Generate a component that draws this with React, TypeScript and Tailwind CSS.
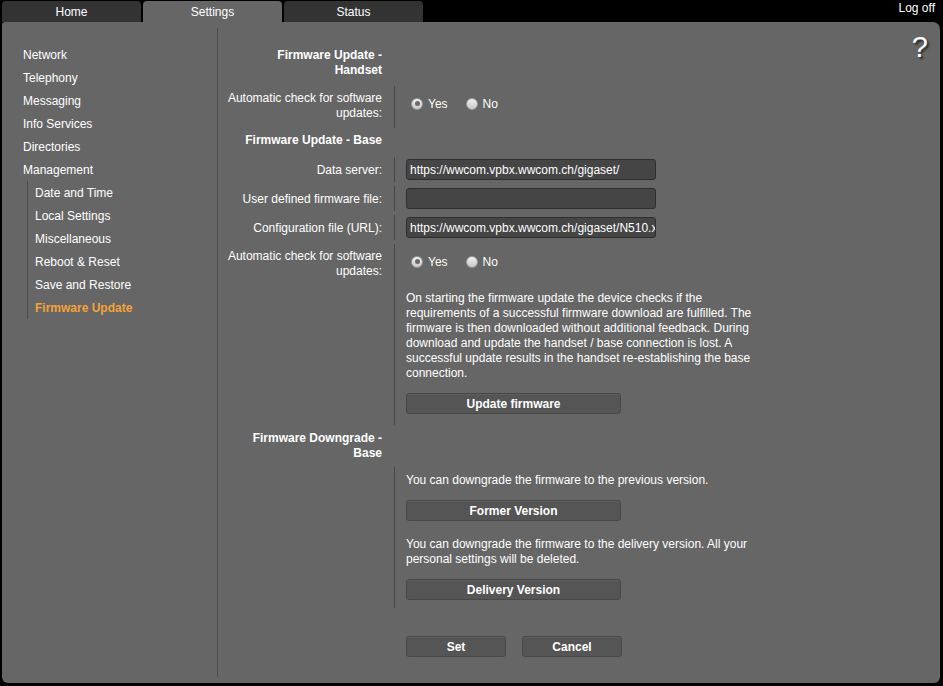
import React from "react";

const font = { fontFamily: '"Liberation Sans", Arial, sans-serif' };

function Radio({ checked }: { checked?: boolean }) {
  return (
    <span className="relative inline-flex h-[12px] w-[12px] items-center justify-center rounded-full border border-[#9a9a9a] bg-gradient-to-b from-[#f2f2f2] to-[#c8c8c8]">
      {checked && <span className="h-[5px] w-[5px] rounded-full bg-[#6a6a6a]" />}
    </span>
  );
}

function YesNo() {
  return (
    <div className="flex h-[15px] items-center pl-[5px]">
      <Radio checked />
      <span className="ml-[5px]">Yes</span>
      <span className="ml-[18px] flex items-center">
        <Radio />
        <span className="ml-[5px]">No</span>
      </span>
    </div>
  );
}

function Btn({ children, w = "w-[215px]" }: { children: React.ReactNode; w?: string }) {
  return (
    <button
      className={`${w} h-[21px] rounded-[3px] border border-[#484848] bg-[#555555] text-[12px] font-bold leading-none text-white shadow-[inset_0_1px_0_#5e5e5e]`}
      style={font}
    >
      {children}
    </button>
  );
}

function Field({ value }: { value: string }) {
  return (
    <input
      readOnly
      value={value}
      className="h-[21px] w-[250px] rounded-[3px] border border-[#2f2f2f] bg-[#454545] pl-[3px] text-[12px] text-white outline-none"
      style={font}
    />
  );
}

function Header({ children }: { children: React.ReactNode }) {
  return (
    <div className="flex">
      <div className="w-[176px] whitespace-nowrap py-[5px] pr-[12px] text-right font-bold leading-[15px]">
        {children}
      </div>
    </div>
  );
}

function InputRow({ label, value }: { label: string; value: string }) {
  return (
    <div className="flex h-[29px]">
      <div className="flex w-[176px] items-center justify-end whitespace-nowrap pr-[12px]">{label}</div>
      <div className="my-[2px] flex items-center border-l border-[#474747] pl-[11px]">
        <Field value={value} />
      </div>
    </div>
  );
}

const sideMain = ["Network", "Telephony", "Messaging", "Info Services", "Directories", "Management"];
const sideSub = ["Date and Time", "Local Settings", "Miscellaneous", "Reboot & Reset", "Save and Restore", "Firmware Update"];

export default function App() {
  return (
    <div className="h-[686px] w-[943px] bg-black text-[12px] text-white" style={font}>
      {/* Tabs */}
      <div className="flex h-[22px] items-end pl-[2px]">
        <div className="flex h-[21px] w-[139px] items-center justify-center rounded-t-[4px] bg-[#333333]">Home</div>
        <div className="ml-[2px] flex h-[21px] w-[139px] items-center justify-center rounded-t-[4px] bg-[#666666]">Settings</div>
        <div className="ml-[2px] flex h-[21px] w-[139px] items-center justify-center rounded-t-[4px] bg-[#333333]">Status</div>
        <div className="flex-1" />
        <div className="self-start pr-[8px] pt-[1px] leading-[14px]">Log off</div>
      </div>

      {/* Panel */}
      <div className="relative ml-[2px] flex h-[661px] w-[938px] rounded-bl-[6px] rounded-br-[6px] rounded-tl-[3px] rounded-tr-[7px] bg-[#666666]">
        <div className="absolute right-[12px] top-[8px] text-[29px] leading-[34px] [text-shadow:2px_2px_2px_#2a2a2a]">?</div>

        {/* Sidebar */}
        <div className="my-[6px] w-[216px] border-r border-[#4c4c4c] pl-[21px] pt-[15px]">
          {sideMain.map((s) => (
            <div key={s} className="flex h-[23px] items-center">{s}</div>
          ))}
          <div className="ml-[4px] border-l border-[#4c4c4c] pl-[7px]">
            {sideSub.map((s) => (
              <div
                key={s}
                className={`flex h-[23px] items-center ${s === "Firmware Update" ? "font-bold text-[#f4a23a]" : ""}`}
              >
                {s}
              </div>
            ))}
          </div>
        </div>

        {/* Main */}
        <div className="pt-[21px]">
          <Header>
            Firmware Update -<br />Handset
          </Header>

          <div className="mt-[3px] flex">
            <div className="w-[176px] whitespace-nowrap pt-[5px] pr-[12px] text-right leading-[15px]">
              Automatic check for software<br />updates:
            </div>
            <div className="h-[42px] border-l border-[#474747] pl-[11px] pt-[10px]">
              <YesNo />
            </div>
          </div>

          <Header>Firmware Update - Base</Header>

          <div className="mt-[2px]">
            <InputRow label="Data server:" value="https://wwcom.vpbx.wwcom.ch/gigaset/" />
            <InputRow label="User defined firmware file:" value="" />
            <InputRow label="Configuration file (URL):" value="https://wwcom.vpbx.wwcom.ch/gigaset/N510.xml" />
          </div>

          <div className="mt-[2px] flex">
            <div className="w-[176px] whitespace-nowrap pt-[5px] pr-[12px] text-right leading-[15px]">
              Automatic check for software<br />updates:
            </div>
            <div className="border-l border-[#474747] pb-[10px] pl-[11px] pt-[10px]">
              <YesNo />
              <p className="mt-[22px] whitespace-nowrap leading-[15px]">
                On starting the firmware update the device checks if the<br />
                requirements of a successful firmware download are fulfilled. The<br />
                firmware is then downloaded without additional feedback. During<br />
                download and update the handset / base connection is lost. A<br />
                successful update results in the handset re-establishing the base<br />
                connection.
              </p>
              <div className="mt-[12px] mb-[1px]">
                <Btn>Update firmware</Btn>
              </div>
            </div>
          </div>

          <div className="mt-[1px]">
            <Header>
              Firmware Downgrade -<br />Base
            </Header>
          </div>

          <div className="mt-[1px] flex">
            <div className="w-[176px]" />
            <div className="border-l border-[#474747] pb-[8px] pl-[11px] pt-[6px]">
              <p className="leading-[15px]">You can downgrade the firmware to the previous version.</p>
              <div className="mt-[12px]">
                <Btn>Former Version</Btn>
              </div>
              <p className="mt-[16px] whitespace-nowrap leading-[15px]">
                You can downgrade the firmware to the delivery version. All your<br />
                personal settings will be deleted.
              </p>
              <div className="mt-[12px]">
                <Btn>Delivery Version</Btn>
              </div>
            </div>
          </div>

          <div className="ml-[188px] mt-[28px] flex gap-[16px]">
            <Btn w="w-[100px]">Set</Btn>
            <Btn w="w-[100px]">Cancel</Btn>
          </div>
        </div>
      </div>
    </div>
  );
}
